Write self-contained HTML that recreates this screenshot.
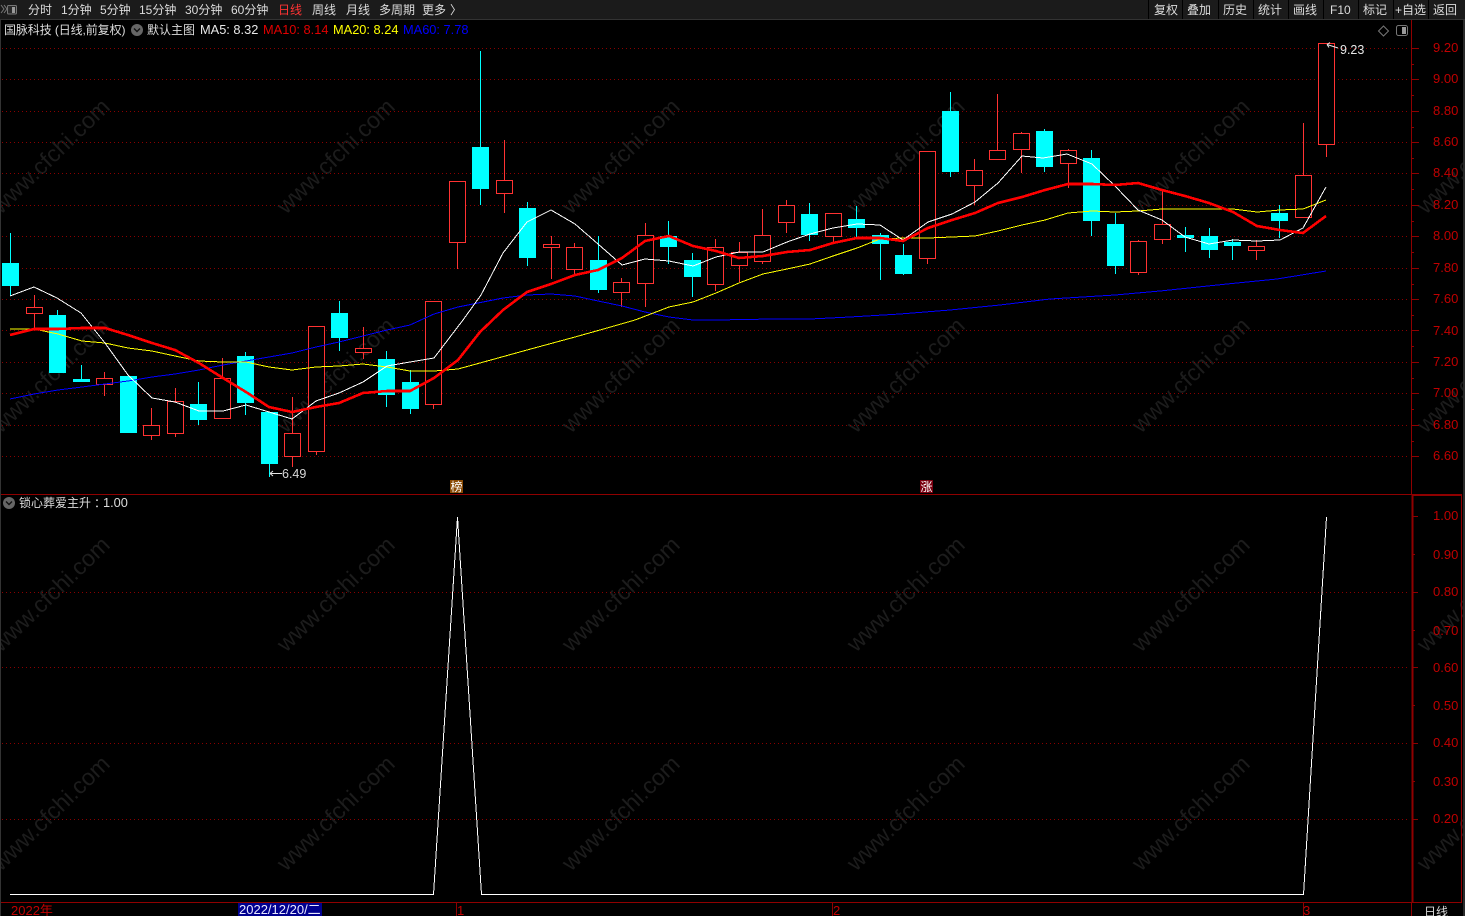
<!DOCTYPE html>
<html lang="zh">
<head>
<meta charset="utf-8">
<title>国脉科技 日线</title>
<style>
html,body{margin:0;padding:0;background:#000;width:1465px;height:916px;overflow:hidden}
svg{display:block;font-family:"Liberation Sans","Noto Sans CJK SC",sans-serif}
.tb text{font-size:12px;fill:#dcdcdc}
.ax text{font-size:13px;fill:#c00000}
.wm text{font-size:23.2px;fill:#1c1c1c}
.grid{stroke:#8a0000;stroke-width:1;stroke-dasharray:1 3;fill:none}
</style>
</head>
<body>
<svg width="1465" height="916" viewBox="0 0 1465 916" xmlns="http://www.w3.org/2000/svg">
<rect width="1465" height="916" fill="#000"/>

<!-- watermark -->
<g class="wm">
<text transform="translate(1 215) rotate(-44)">www.cfchi.com</text>
<text transform="translate(286 215) rotate(-44)">www.cfchi.com</text>
<text transform="translate(571 215) rotate(-44)">www.cfchi.com</text>
<text transform="translate(856 215) rotate(-44)">www.cfchi.com</text>
<text transform="translate(1141 215) rotate(-44)">www.cfchi.com</text>
<text transform="translate(1426 215) rotate(-44)">www.cfchi.com</text>
<text transform="translate(1 434) rotate(-44)">www.cfchi.com</text>
<text transform="translate(286 434) rotate(-44)">www.cfchi.com</text>
<text transform="translate(571 434) rotate(-44)">www.cfchi.com</text>
<text transform="translate(856 434) rotate(-44)">www.cfchi.com</text>
<text transform="translate(1141 434) rotate(-44)">www.cfchi.com</text>
<text transform="translate(1426 434) rotate(-44)">www.cfchi.com</text>
<text transform="translate(1 653) rotate(-44)">www.cfchi.com</text>
<text transform="translate(286 653) rotate(-44)">www.cfchi.com</text>
<text transform="translate(571 653) rotate(-44)">www.cfchi.com</text>
<text transform="translate(856 653) rotate(-44)">www.cfchi.com</text>
<text transform="translate(1141 653) rotate(-44)">www.cfchi.com</text>
<text transform="translate(1426 653) rotate(-44)">www.cfchi.com</text>
<text transform="translate(1 872) rotate(-44)">www.cfchi.com</text>
<text transform="translate(286 872) rotate(-44)">www.cfchi.com</text>
<text transform="translate(571 872) rotate(-44)">www.cfchi.com</text>
<text transform="translate(856 872) rotate(-44)">www.cfchi.com</text>
<text transform="translate(1141 872) rotate(-44)">www.cfchi.com</text>
<text transform="translate(1426 872) rotate(-44)">www.cfchi.com</text>
</g>

<!-- grid -->
<path class="grid" shape-rendering="crispEdges" d="M2 48.5H1408M2 79.5H1408M2 111.5H1408M2 142.5H1408M2 173.5H1408M2 205.5H1408M2 236.5H1408M2 268.5H1408M2 299.5H1408M2 330.5H1408M2 362.5H1408M2 393.5H1408M2 425.5H1408M2 456.5H1408M2 592.5H1408M2 667.5H1408M2 743.5H1408M2 819.5H1408"/>

<!-- red candle wicks + bodies -->
<g shape-rendering="crispEdges">
<path stroke="#ff3232" fill="none" d="M34.5 295V328M104.5 372V396M151.5 408V440M175.5 388V437M222.5 358V418M292.5 397V467M316.5 326V455M363.5 327V359M433.5 301V409M457.5 181V269M504.5 140V213M551.5 236V279M574.5 243V275M621.5 278V307M645.5 223V307M715.5 239V291M739.5 242V282M762.5 209V264M786.5 200V233M833.5 213V243M927.5 151V264M974.5 159V205M997.5 94V159M1021.5 132V173M1068.5 149V188M1138.5 240V275M1162.5 190V244M1256.5 240V260M1303.5 123V217M1326.5 43V157"/>
<path stroke="#ff3232" fill="#000" d="M26.5 307.5h16v6h-16zM96.5 378.5h16v6h-16zM143.5 425.5h16v10h-16zM167.5 401.5h16v32h-16zM214.5 378.5h16v40h-16zM284.5 433.5h16v23h-16zM308.5 326.5h16v125h-16zM355.5 348.5h16v4h-16zM425.5 301.5h16v103h-16zM449.5 181.5h16v61h-16zM496.5 180.5h16v13h-16zM543.5 244.5h16v3h-16zM566.5 247.5h16v22h-16zM613.5 282.5h16v10h-16zM637.5 235.5h16v48h-16zM707.5 247.5h16v37h-16zM731.5 252.5h16v13h-16zM754.5 235.5h16v26h-16zM778.5 205.5h16v17h-16zM825.5 213.5h16v23h-16zM919.5 151.5h16v107h-16zM966.5 170.5h16v15h-16zM989.5 150.5h16v9h-16zM1013.5 133.5h16v16h-16zM1060.5 150.5h16v13h-16zM1130.5 241.5h16v31h-16zM1154.5 224.5h16v15h-16zM1248.5 246.5h16v4h-16zM1295.5 175.5h16v42h-16zM1318.5 43.5h16v101h-16z"/>
<!-- cyan candle wicks + bodies -->
<path stroke="#00ffff" fill="none" d="M10.5 233V296M57.5 310V320M81.5 365V382M198.5 382V425M245.5 352V415M269.5 412V477M339.5 301V351M386.5 351V407M410.5 370V414M480.5 51V205M527.5 202V266M598.5 236V293M668.5 221V264M692.5 253V297M809.5 203V241M856.5 206V237M880.5 233V280M903.5 244V275M950.5 92V177M1044.5 129V172M1091.5 150V236M1115.5 213V274M1185.5 227V252M1209.5 228V258M1232.5 239V260M1279.5 205V238"/>
<path fill="#00ffff" d="M2 263h17v23h-17zM49 315h17v58h-17zM73 379h17v3h-17zM120 376h17v57h-17zM190 404h17v16h-17zM237 356h17v47h-17zM261 412h17v52h-17zM331 313h17v25h-17zM378 359h17v36h-17zM402 382h17v27h-17zM472 147h17v42h-17zM519 208h17v50h-17zM590 260h17v30h-17zM660 236h17v11h-17zM684 260h17v17h-17zM801 214h17v21h-17zM848 219h17v9h-17zM872 235h17v9h-17zM895 255h17v19h-17zM942 111h17v61h-17zM1036 131h17v36h-17zM1083 158h17v63h-17zM1107 224h17v42h-17zM1177 235h17v3h-17zM1201 236h17v14h-17zM1224 242h17v4h-17zM1271 213h17v8h-17z"/>
</g>

<!-- moving averages -->
<g fill="none" shape-rendering="crispEdges">
<polyline stroke="#0000ff" stroke-width="1" points="10,399 34,394 58,390 82,387 105,384 128,381 152,377 175,374 199,370 223,365 246,361 269,357 292,353 316,347 339,342 363,336 387,330 410,325 434,314 458,307 473,304 503,298 527,295 551,294 575,296 598,301 622,306 645,312 669,317 693,320 716,320 773,319 810,319 850,317 900,314 950,310 1000,305 1050,299 1115,295 1160,291 1227,284 1277,279 1326,271"/>
<polyline stroke="#ffff00" stroke-width="1" points="10,329 34,329 58,334 82,341 105,343 128,348 152,351 175,356 199,361 223,362 246,362 269,367 292,370 316,367 339,366 363,364 387,367 410,371 434,371 458,369 480,363 527,350 575,337 600,330 635,320 669,307 693,302 716,293 739,283 763,274 787,269 810,264 833,256 857,248 880,239 903,238 928,238 952,237 975,236 998,231 1022,225 1045,220 1068,213 1092,211 1115,212 1138,211 1162,209 1185,209 1209,209 1233,209 1257,212 1280,210 1303,209 1326,200"/>
<polyline stroke="#ffffff" stroke-width="1" points="10,296 34,287 57,298 81,313 105,343 128,375 152,398 175,402 199,411 223,411 246,405 269,412 292,419 316,401 339,393 363,382 387,366 410,362 434,358 463,320 481,295 503,253 527,222 551,210 575,224 598,244 622,265 645,259 669,261 693,266 716,257 739,252 763,252 787,242 810,234 833,228 857,224 880,225 903,240 928,222 952,214 975,202 998,183 1022,156 1043,158 1067,154 1092,164 1115,186 1138,210 1162,220 1185,237 1209,244 1233,240 1257,241 1280,240 1303,228 1326,187"/>
<polyline stroke="#ff0000" stroke-width="2.6" points="10,335 34,329 58,329 82,328 105,328 128,335 152,343 175,350 199,363 223,378 246,392 269,407 292,412 316,407 339,403 363,393 387,391 410,391 434,378 458,360 480,332 503,310 527,292 551,284 575,275 598,270 622,258 645,241 669,236 693,246 716,251 739,258 763,256 787,252 810,250 833,243 857,238 880,238 903,241 928,228 952,220 975,213 998,203 1022,197 1045,190 1068,184 1092,184 1115,185 1138,183 1162,190 1185,196 1209,203 1233,212 1257,226 1280,230 1303,233 1326,216"/>
</g>

<!-- price annotations -->
<g fill="none" stroke="#e6e6e6" stroke-width="1">
<path d="M270 473.5H282M270 473.5l3-2.5M270 473.5l3 2.5"/>
<path d="M1327 44.5L1338 48M1327 44.5l3-2M1327 44.5l2 3"/>
</g>
<text x="282" y="478" font-size="12.5" fill="#d8d8d8">6.49</text>
<text x="1340" y="54" font-size="12.5" fill="#e6e6e6">9.23</text>

<!-- badges -->
<rect x="450" y="480" width="13" height="13" fill="#8a4a05"/>
<text x="450.5" y="491" font-size="12" fill="#fff">榜</text>
<rect x="920" y="480" width="13" height="13" fill="#7a0010"/>
<text x="920.5" y="491" font-size="12" fill="#fff">涨</text>

<!-- lower panel curve -->
<path shape-rendering="crispEdges" fill="none" stroke="#fff" stroke-width="1" d="M10 894.5H433.5L457.5 517L481.5 894.5H1303.5L1326.5 517"/>

<!-- frame -->
<g shape-rendering="crispEdges" fill="none" stroke="#8f0000">
<path d="M1411.5 20V495"/>
<path d="M0 494.5H1412" stroke-width="1"/>
<path d="M1412 495H1462" stroke-width="2"/>
<path d="M1412.5 495V902" stroke-width="2"/>
<path d="M1461.5 495V902"/>
<path d="M0 902.5H1462" stroke-width="1"/>
<path d="M1411.5 903V916M456.5 903V916M832.5 903V916M1303.5 903V916"/>
<path d="M1411 48.5h8M1411 79.5h8M1411 111.5h8M1411 142.5h8M1411 173.5h8M1411 205.5h8M1411 236.5h8M1411 268.5h8M1411 299.5h8M1411 330.5h8M1411 362.5h8M1411 393.5h8M1411 425.5h8M1411 456.5h8M1411 64.5h3M1411 95.5h3M1411 127.5h3M1411 158.5h3M1411 189.5h3M1411 221.5h3M1411 252.5h3M1411 284.5h3M1411 315.5h3M1411 346.5h3M1411 378.5h3M1411 409.5h3M1411 441.5h3"/>
<path d="M1413 516.5h5M1413 554.5h2M1413 592.5h5M1413 630.5h2M1413 667.5h5M1413 705.5h2M1413 743.5h5M1413 781.5h2M1413 819.5h5"/>
</g>

<!-- axis labels -->
<g class="ax">
<text x="1433" y="52">9.20</text><text x="1433" y="83">9.00</text><text x="1433" y="115">8.80</text><text x="1433" y="146">8.60</text><text x="1433" y="177">8.40</text><text x="1433" y="209">8.20</text><text x="1433" y="240">8.00</text><text x="1433" y="272">7.80</text><text x="1433" y="303">7.60</text><text x="1433" y="335">7.40</text><text x="1433" y="366">7.20</text><text x="1433" y="397">7.00</text><text x="1433" y="429">6.80</text><text x="1433" y="460">6.60</text>
<text x="1433" y="520">1.00</text><text x="1433" y="559">0.90</text><text x="1433" y="596">0.80</text><text x="1433" y="635">0.70</text><text x="1433" y="672">0.60</text><text x="1433" y="710">0.50</text><text x="1433" y="747">0.40</text><text x="1433" y="786">0.30</text><text x="1433" y="823">0.20</text>
<text x="11" y="915">2022年</text>
<text x="457" y="915">1</text>
<text x="833" y="915">2</text>
<text x="1303" y="915">3</text>
</g>
<rect x="238" y="903" width="84" height="13" fill="#000090"/>
<text x="239" y="914" font-size="13" fill="#e8e8ff">2022/12/20/二</text>
<text x="1424" y="916" font-size="12" fill="#d8d8d8">日线</text>

<!-- legend upper -->
<text x="4" y="34" font-size="12" letter-spacing="-.1" fill="#dcdcdc">国脉科技 (日线,前复权)</text>
<circle cx="137" cy="30" r="6" fill="#666"/>
<path d="M134 28.5l3 3 3-3" fill="none" stroke="#111" stroke-width="1.4"/>
<text x="147" y="34" font-size="12" fill="#dcdcdc">默认主图</text>
<text x="200" y="34" font-size="12.8" fill="#e8e8e8">MA5: 8.32</text>
<text x="263" y="34" font-size="12.8" fill="#e00000">MA10: 8.14</text>
<text x="333" y="34" font-size="12.8" fill="#ffff00">MA20: 8.24</text>
<text x="403" y="34" font-size="12.8" fill="#0000ff">MA60: 7.78</text>

<!-- legend lower -->
<circle cx="9" cy="503" r="6" fill="#666"/>
<path d="M6 501.5l3 3 3-3" fill="none" stroke="#111" stroke-width="1.4"/>
<text x="19" y="507" font-size="12" fill="#dcdcdc">锁心葬爱主升</text>
<text x="94" y="507" font-size="12" fill="#dcdcdc">：</text>
<text x="103" y="507" font-size="12.8" fill="#dcdcdc">1.00</text>

<!-- top-right small icons -->
<path d="M1383.5 26l5 5-5 5-5-5z" fill="none" stroke="#777"/>
<rect x="1396.5" y="25.5" width="11" height="10" rx="2" fill="none" stroke="#777"/>
<rect x="1402" y="27" width="4" height="7" fill="#999"/>

<!-- left and right edge -->
<rect x="0" y="20" width="1" height="896" fill="#333"/>
<rect x="1463" y="20" width="2" height="896" fill="#2a2a2a"/>

<!-- toolbar -->
<rect x="0" y="0" width="1465" height="19" fill="#1b1b1b"/>
<rect x="0" y="19" width="1465" height="1" fill="#333"/>
<g fill="#000" shape-rendering="crispEdges">
<rect x="1148" y="0" width="1" height="19"/><rect x="1182" y="0" width="1" height="19"/><rect x="1218" y="0" width="1" height="19"/><rect x="1253" y="0" width="1" height="19"/><rect x="1288" y="0" width="1" height="19"/><rect x="1323" y="0" width="1" height="19"/><rect x="1358" y="0" width="1" height="19"/><rect x="1393" y="0" width="1" height="19"/><rect x="1428" y="0" width="1" height="19"/>
</g>
<path d="M1 5l3 4-3 4M4 5l3 4-3 4" fill="none" stroke="#777"/>
<rect x="7.5" y="5.5" width="9" height="8.5" rx="1" fill="#2a2a2a" stroke="#777"/>
<rect x="12" y="7" width="3" height="6" fill="#999"/>
<g class="tb">
<text x="28" y="14">分时</text>
<text x="61" y="14">1分钟</text>
<text x="100" y="14">5分钟</text>
<text x="139" y="14">15分钟</text>
<text x="185" y="14">30分钟</text>
<text x="231" y="14">60分钟</text>
<text x="278" y="14" style="fill:#ff3333">日线</text>
<text x="312" y="14">周线</text>
<text x="346" y="14">月线</text>
<text x="379" y="14">多周期</text>
<text x="422" y="14">更多</text>
<text x="450" y="14">〉</text>
<text x="1154" y="14">复权</text>
<text x="1187" y="14">叠加</text>
<text x="1223" y="14">历史</text>
<text x="1258" y="14">统计</text>
<text x="1293" y="14">画线</text>
<text x="1330" y="14">F10</text>
<text x="1363" y="14">标记</text>
<text x="1395" y="14">+自选</text>
<text x="1433" y="14">返回</text>
</g>
</svg>
</body>
</html>
